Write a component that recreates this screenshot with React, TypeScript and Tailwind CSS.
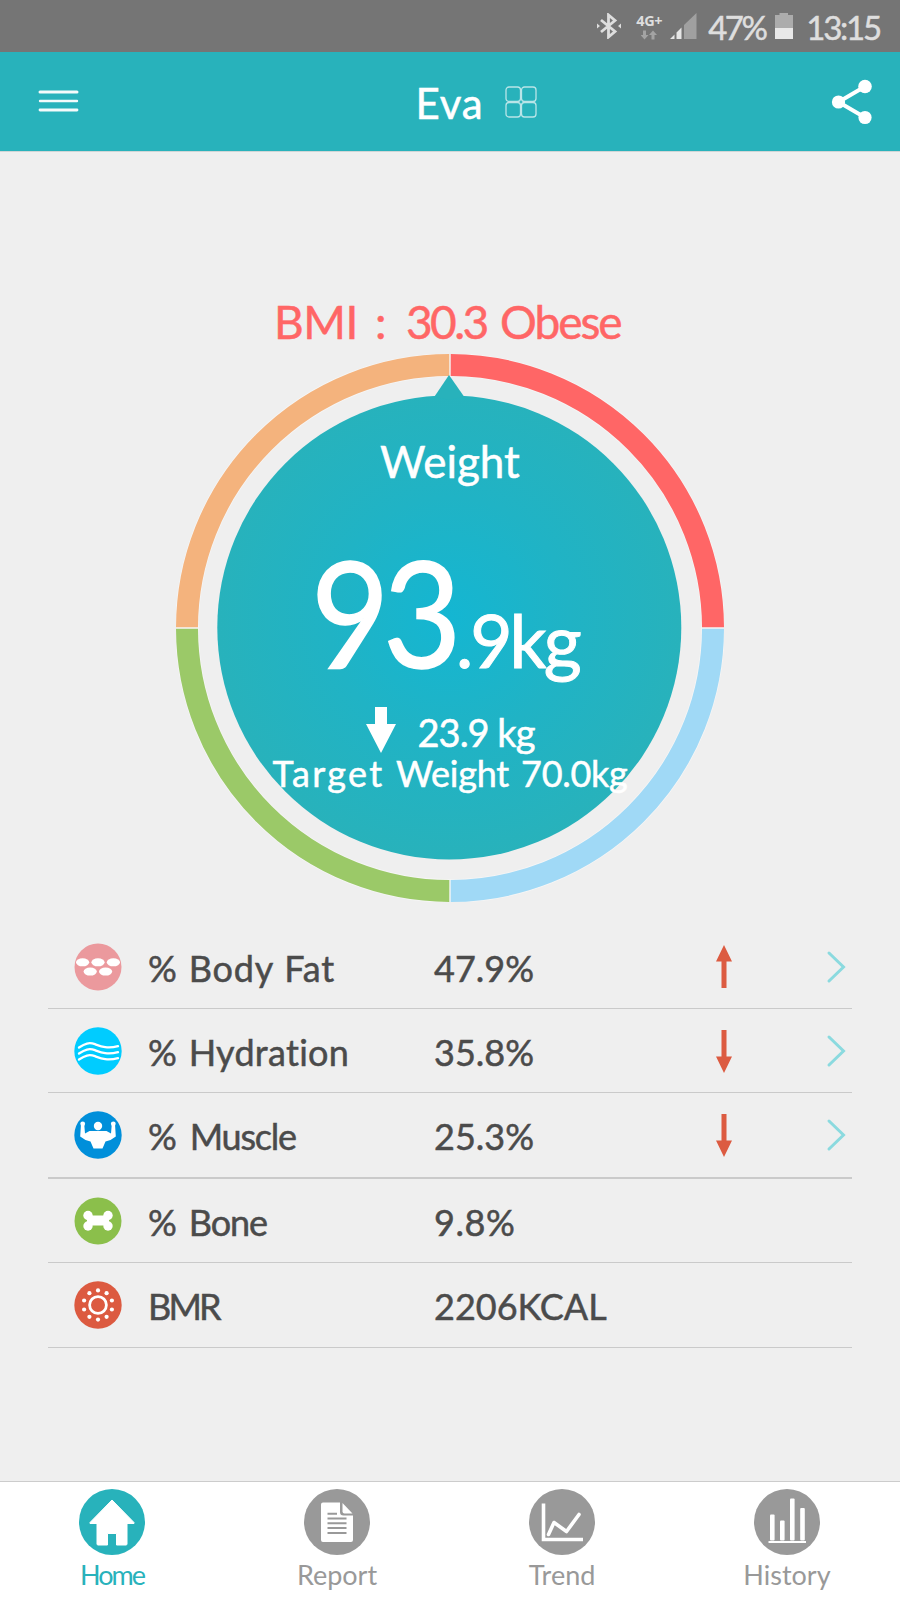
import type { ReactNode } from 'react'
import clsx from 'clsx'

interface Metric {
  label: string
  labelClass: string
  value: string
  valueClass: string
  rowClass: string
  trend?: 'up' | 'down'
  icon: ReactNode
}

interface Tab {
  label: string
  labelClass: string
  active?: boolean
  icon: ReactNode
}

const METRICS: Metric[] = [
  {
    label: '% Body Fat',
    labelClass: 'tracking-[0.8px] [word-spacing:1px]',
    value: '47.9%',
    valueClass: 'tracking-[0px]',
    rowClass: 'h-[84px] border-b',
    trend: 'up',
    icon: (
      <>
        <circle cx="24" cy="24" r="23.5" fill="#eb999d" />
        <g fill="#fff">
          <ellipse cx="8.6" cy="19.3" rx="6.6" ry="4" />
          <ellipse cx="24" cy="19.3" rx="6.6" ry="4" />
          <ellipse cx="39.4" cy="19.3" rx="6.6" ry="4" />
          <ellipse cx="16.2" cy="28.6" rx="6.6" ry="4" />
          <ellipse cx="31.6" cy="28.6" rx="6.6" ry="4" />
        </g>
      </>
    ),
  },
  {
    label: '% Hydration',
    labelClass: 'tracking-[0.3px] [word-spacing:2px]',
    value: '35.8%',
    valueClass: 'tracking-[0px]',
    rowClass: 'h-[84px] border-b',
    trend: 'down',
    icon: (
      <>
        <circle cx="24" cy="24" r="23.7" fill="#00ccff" />
        <g fill="none" stroke="#fff" strokeWidth="2.3" strokeLinecap="round">
          <path d="M5 20.5C11 16.5 15 15 21 17.2S33 22 44 19.2" />
          <path d="M5 26.5C11 22.5 15 21 21 23.2S33 28 44 25.2" />
          <path d="M5 32.5C11 28.5 15 27 21 29.2S33 34 44 31.2" />
        </g>
      </>
    ),
  },
  {
    label: '% Muscle',
    labelClass: 'tracking-[-1.2px] [word-spacing:6px]',
    value: '25.3%',
    valueClass: 'tracking-[0px]',
    rowClass: 'h-[86px] border-b-2',
    trend: 'down',
    icon: (
      <>
        <circle cx="24" cy="24" r="23.7" fill="#008fda" />
        <g fill="#fff">
          <circle cx="24" cy="15" r="4.2" />
          <circle cx="8.7" cy="12.8" r="2.4" />
          <circle cx="39.3" cy="12.8" r="2.4" />
          <path d="M7 13h3.2l.8 9.5 4.5-2.5h17l4.5 2.5.8-9.5H41l.8 12.5-5.3 3.5-5 1.5-3 7h-9l-3-7-5-1.5-5.3-3.5z" />
        </g>
      </>
    ),
  },
  {
    label: '% Bone',
    labelClass: 'tracking-[-1.1px] [word-spacing:5px]',
    value: '9.8%',
    valueClass: 'tracking-[0.6px]',
    rowClass: 'h-[84px] border-b',
    icon: (
      <>
        <circle cx="24" cy="24" r="23.5" fill="#8bbf4b" />
        <g fill="#fff">
          <rect x="13" y="18.5" width="22" height="10" />
          <circle cx="14" cy="18.5" r="4.7" />
          <circle cx="14" cy="29" r="4.7" />
          <circle cx="34" cy="18.5" r="4.7" />
          <circle cx="34" cy="29" r="4.7" />
        </g>
      </>
    ),
  },
  {
    label: 'BMR',
    labelClass: 'tracking-[-2.8px]',
    value: '2206KCAL',
    valueClass: 'tracking-[0px]',
    rowClass: 'h-[85px] border-b',
    icon: (
      <>
        <circle cx="24" cy="24" r="23.7" fill="#dc5a40" />
        <circle cx="24" cy="24" r="8.4" fill="none" stroke="#fff" strokeWidth="2.8" />
        <g fill="#fff">
          <circle cx="24" cy="9.4" r="2.1" />
          <circle cx="32.6" cy="12.2" r="2.1" />
          <circle cx="37.9" cy="19.5" r="2.1" />
          <circle cx="37.9" cy="28.5" r="2.1" />
          <circle cx="32.6" cy="35.8" r="2.1" />
          <circle cx="24" cy="38.6" r="2.1" />
          <circle cx="15.4" cy="35.8" r="2.1" />
          <circle cx="10.1" cy="28.5" r="2.1" />
          <circle cx="10.1" cy="19.5" r="2.1" />
          <circle cx="15.4" cy="12.2" r="2.1" />
        </g>
      </>
    ),
  },
]

const TABS: Tab[] = [
  {
    label: 'Home',
    labelClass: 'tracking-[-2px]',
    active: true,
    icon: (
      <path
        d="M33 11 55 33.5v1h-7V55q0 1-1 1H37.5V44.5h-9V56H19q-1 0-1-1V34.5h-7v-1z"
        fill="#fff"
        stroke="#fff"
        strokeLinejoin="round"
      />
    ),
  },
  {
    label: 'Report',
    labelClass: 'tracking-[0px]',
    icon: (
      <>
        <path d="M19 13.5h17V23q0 3.5 3.5 3.5H49V51q0 2-2 2H19q-2 0-2-2V15.5q0-2 2-2z" fill="#fff" />
        <path d="M38.5 14 48.5 24.5h-8q-2 0-2-2z" fill="#fff" />
        <path d="M23.5 24.7h9.5M23.5 29.5h19M23.5 34.3h19M23.5 39.1h19M23.5 44h19" stroke="#999" strokeWidth="2" />
      </>
    ),
  },
  {
    label: 'Trend',
    labelClass: 'tracking-[0px]',
    icon: (
      <g fill="none" stroke="#fff" strokeWidth="3.6">
        <path d="M14.5 14.5V50.5H54" />
        <path d="M19.5 45.5 25 33.5 37.5 42.5 50 25.5" strokeLinejoin="round" strokeLinecap="round" />
      </g>
    ),
  },
  {
    label: 'History',
    labelClass: 'tracking-[0px]',
    icon: (
      <g fill="#fff">
        <rect x="16" y="25.5" width="4.6" height="26" rx="1" />
        <rect x="26" y="31.5" width="4.6" height="20" rx="1" />
        <rect x="36" y="9.5" width="4.6" height="42" rx="1" />
        <rect x="46.2" y="19" width="4.6" height="32.5" rx="1" />
        <rect x="14.5" y="52" width="37.5" height="2" />
      </g>
    ),
  },
]

function StatusBar() {
  return (
    <div className="flex h-[52px] shrink-0 items-start justify-end bg-[#757575] pt-[13px] pr-[20px] text-[#dedede]">
      <svg width="26" height="26" viewBox="0 0 26 26" className="mr-[13px]">
        <path d="M5 7 19 18.5 12.5 24V2L19 7.5 5 19" fill="none" stroke="#dedede" strokeWidth="2.8" />
        <path d="M1 10.5v5l3-2.5zM25 10.5v5l-3-2.5z" fill="#dedede" />
      </svg>
      <div className="mr-[7px] flex w-[28px] flex-col items-center">
        <span className="mt-px font-['Open_Sans'] text-[14.5px] leading-[13px] font-bold tracking-[-0.4px] [-webkit-text-stroke:0px]">4G+</span>
        <svg width="16" height="10" viewBox="0 0 16 10" className="mt-[3px]" fill="#a3a3a3">
          <path d="M2 .5h3V5h2.5L3.5 9.5-.5 5H2z" />
          <path d="M10.5 9.5h3V5H16L12 .5 8 5h2.5z" />
        </svg>
      </div>
      <svg width="27" height="26" viewBox="0 0 27 26" className="mr-[11px]">
        <path d="M0 26 4.5 21.5V26zM6.5 19.5 11.5 14.5V26h-5z" fill="#e6e6e6" />
        <path d="M14 12 26.5 0V26H14z" fill="#a0a0a0" />
      </svg>
      <span className="w-[60px] text-[33px] leading-[28px] tracking-[-2.5px]">47%</span>
      <svg width="18" height="26" viewBox="0 0 18 26" className="mx-[7px]">
        <path d="M0 2h4.5V0h8.5v2H18v13H0z" fill="#acacac" />
        <path d="M0 15h18v11H0z" fill="#e8e8e8" />
      </svg>
      <span className="ml-[6px] text-[33px] leading-[28px] tracking-[-2.2px]">13:15</span>
    </div>
  )
}

function Header() {
  return (
    <header className="flex h-[100px] shrink-0 items-center justify-between border-b border-[#d0d6d6] bg-[#28b2bb] pr-[27px] pl-[38px] text-white">
      <svg width="42" height="24" viewBox="0 0 42 24" stroke="#fff" strokeLinecap="round" className="mb-px opacity-95">
        <path d="M2 3h37" strokeWidth="3" />
        <path d="M2 12h37" strokeWidth="2.4" />
        <path d="M2 21h37" strokeWidth="2.8" />
      </svg>
      <div className="flex items-center gap-[22px] pl-[42px]">
        <h1 className="pt-[2px] text-[42px] leading-none tracking-[0.8px]">Eva</h1>
        <svg width="32" height="32" viewBox="0 0 32 32" fill="none" stroke="#b9e5e8" strokeWidth="1.3">
          <rect x="1" y="1" width="14.5" height="14.5" rx="3" />
          <rect x="16.5" y="1" width="14.5" height="14.5" rx="3" />
          <rect x="1" y="16.5" width="14.5" height="14.5" rx="3" />
          <rect x="16.5" y="16.5" width="14.5" height="14.5" rx="3" />
        </svg>
      </div>
      <svg width="42" height="46" viewBox="0 0 42 46" fill="#fff">
        <path d="M34 7.5 7.5 23 34 38.5" fill="none" stroke="#fff" strokeWidth="4" />
        <circle cx="7.5" cy="23" r="6.6" />
        <circle cx="34" cy="7.5" r="6.8" />
        <circle cx="34" cy="38.5" r="6.6" />
      </svg>
    </header>
  )
}

function WeightGauge() {
  return (
    <div className="relative flex h-[548px] w-[548px] flex-col items-center text-white">
      <svg viewBox="0 0 548 548" className="absolute inset-0">
        <defs>
          <radialGradient id="dial" cx="0.5" cy="0.48" r="0.52">
            <stop offset="0" stopColor="#14b6d2" />
            <stop offset="0.5" stopColor="#20b3c5" />
            <stop offset="1" stopColor="#28b2bb" />
          </radialGradient>
        </defs>
        <circle cx="274" cy="274" r="263" fill="none" stroke="#f6f6f6" strokeWidth="23.5" />
        <g fill="none" strokeWidth="22">
          <path d="M274.7 11A263 263 0 0 1 537 273.3" stroke="#ff6666" />
          <path d="M537 274.7A263 263 0 0 1 274.7 537" stroke="#a0d9f6" />
          <path d="M273.3 537A263 263 0 0 1 11 274.7" stroke="#9bc968" />
          <path d="M11 273.3A263 263 0 0 1 273.3 11" stroke="#f4b37d" />
        </g>
        <circle cx="273.3" cy="273.5" r="232" fill="url(#dial)" />
        <path d="M273 21 288 42.5 273 46 258.5 42.5z" fill="#28b2bb" />
      </svg>

      <p className="relative mt-[85px] text-[44px] leading-none tracking-[0px]">Weight</p>
      <p className="relative mt-[52px] flex w-[278px] items-baseline text-[147px] leading-[153px]">
        <span className="w-[145px] origin-left scale-x-[0.92] tracking-[-7px] [-webkit-text-stroke:1.5px]">93</span>
        <span className="text-[73px] leading-none tracking-[-3px] [-webkit-text-stroke:1px]">.9kg</span>
      </p>
      <div className="relative mt-[19px] flex h-[46px]">
        <svg width="30" height="46" viewBox="0 0 30 46" fill="#fff">
          <path d="M9 0h12v17h9L15 46 0 17h9z" />
        </svg>
        <span className="mt-[6px] ml-[22px] text-[38px] leading-none tracking-[-1px]">23.9 kg</span>
      </div>
      <p className="relative mt-[2px] text-[36px] leading-none whitespace-nowrap">
        <span className="tracking-[2.3px]">Target </span>
        <span className="tracking-[-0.2px] [word-spacing:3px]">Weight </span>
        <span className="tracking-[-0.3px]">70.0kg</span>
      </p>
    </div>
  )
}

function MetricRow({ metric }: { metric: Metric }) {
  return (
    <li className={clsx('flex items-center border-[#cacaca] pl-[26px] text-[36px] leading-none text-[#4b4b4b]', metric.rowClass)}>
      <svg width="48" height="48" viewBox="0 0 48 48">
        {metric.icon}
      </svg>
      <span className={clsx('ml-[26px] w-[286px] pt-[2px] whitespace-nowrap', metric.labelClass)}>{metric.label}</span>
      <span className={clsx('w-[282px] pt-[2px]', metric.valueClass)}>{metric.value}</span>
      {metric.trend && (
        <>
          <svg width="16" height="44" viewBox="0 0 16 44" fill="#dc5b41" className={clsx(metric.trend === 'down' && 'rotate-180')}>
            <path d="M8 0 16 16.5h-5.500V43h-5V16.500H0z" />
          </svg>
          <svg width="20" height="34" viewBox="0 0 20 34" fill="none" className="ml-[94px]">
            <path d="M3 3 17.5 17 3 31" stroke="#8bdadf" strokeWidth="3" strokeLinecap="round" />
          </svg>
        </>
      )}
    </li>
  )
}

function TabBar() {
  return (
    <nav className="mt-auto grid h-[119px] shrink-0 grid-cols-4 border-t border-[#cccccc] bg-white [-webkit-text-stroke:0px]">
      {TABS.map(tab => (
        <div
          key={tab.label}
          className={clsx('flex flex-col items-center pt-[7px] pr-px', tab.active ? 'text-[#28b2bb]' : 'text-[#999999]')}
        >
          <svg width="66" height="66" viewBox="0 0 66 66">
            <circle cx="33" cy="33" r="33" fill="currentColor" />
            {tab.icon}
          </svg>
          <span className={clsx('mt-[6px] text-[27px] leading-none', tab.labelClass)}>{tab.label}</span>
        </div>
      ))}
    </nav>
  )
}

export default function App() {
  return (
    <div className="flex h-[1600px] w-[900px] flex-col overflow-hidden bg-[#efefef] font-['Lato','Noto_Sans',sans-serif] [-webkit-text-stroke:0.5px]">
      <StatusBar />
      <Header />
      <main className="flex flex-col items-center pt-[147px]">
        <p className="flex h-[55px] w-[352px] text-[46px] leading-none whitespace-nowrap text-[#ff6666]">
          <span className="w-[101px] tracking-[-0.5px]">BMI</span>
          <span className="w-[31px]">:</span>
          <span className="w-[94px] tracking-[-2.6px]">30.3</span>
          <span className="tracking-[-2px]">Obese</span>
        </p>
        <WeightGauge />
        <ul className="mt-[23px] w-[804px]">
          {METRICS.map(metric => (
            <MetricRow key={metric.label} metric={metric} />
          ))}
        </ul>
      </main>
      <TabBar />
    </div>
  )
}
